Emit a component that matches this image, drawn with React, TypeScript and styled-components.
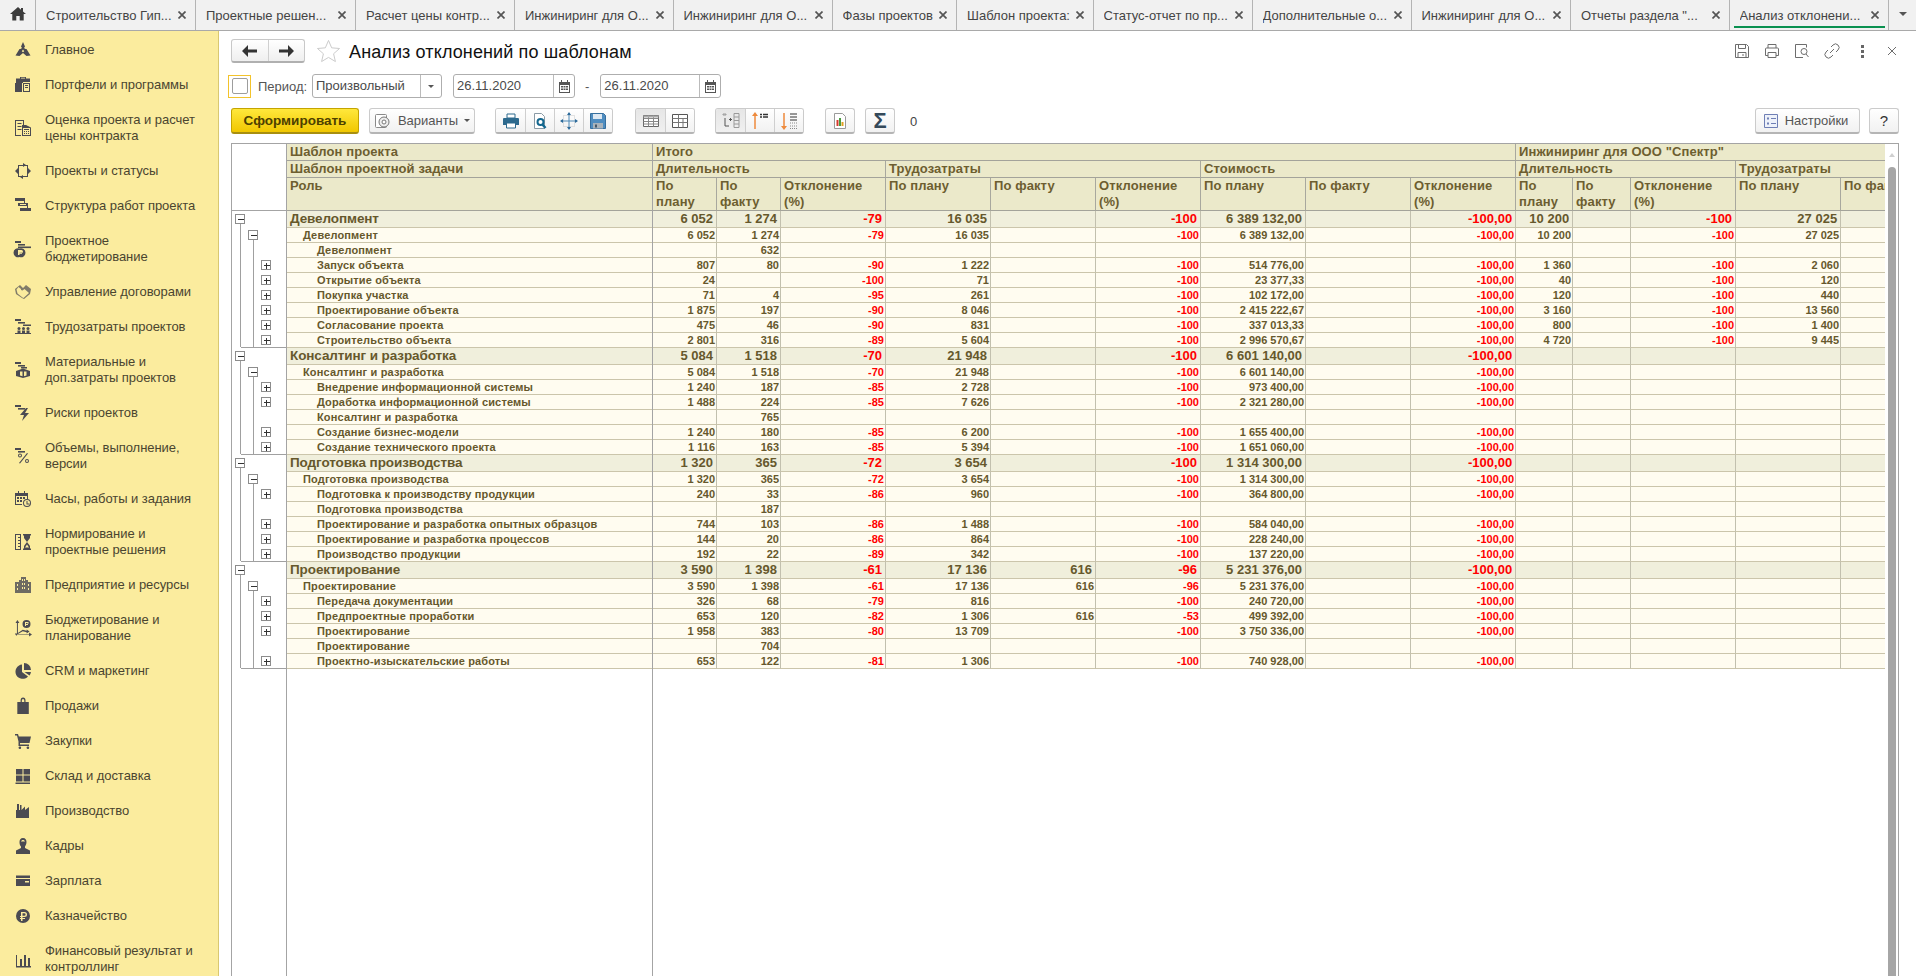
import React from "react";
import styled, { createGlobalStyle } from "styled-components";

const Global = createGlobalStyle`
  html, body { margin: 0; padding: 0; height: 100%; overflow: hidden; background: #fff; }
  #root { height: 100%; }
  * { box-sizing: border-box; }
  body { font-family: "Liberation Sans", Arial, sans-serif; font-size: 13px; color: #4a4530; }
`;

const Page = styled.div`display: flex; flex-direction: column; width: 1916px; height: 976px; overflow: hidden;`;

/* ---------- Tabs ---------- */
const TabBar = styled.div`display: flex; height: 31px; flex: none; background: #f1f1f1; border-bottom: 1px solid #a9a9a9;`;
const HomeTab = styled.div`width: 36px; flex: none; display: flex; align-items: center; justify-content: center; border-right: 1px solid #b4b4b4; padding-bottom: 3px;`;
const Tab = styled.div<{ $w: number; $active?: boolean }>`
  position: relative; flex: none; width: ${p => p.$w}px; display: flex; align-items: center; padding: 0 0 0 10px;
  border-right: 1px solid #b4b4b4; color: #444; font-size: 13px; white-space: nowrap;
  ${p => p.$active ? `&::after { content: ""; position: absolute; left: 4px; right: 3px; bottom: 2px; height: 2px; background: #0a9150; }` : ""}
`;
const TabLabel = styled.span`flex: 1; overflow: hidden;`;
const TabClose = styled.svg`flex: none; width: 8px; height: 8px; margin-right: 9px; fill: none; stroke: #555; stroke-width: 1.7;`;
const TabMenu = styled.div`flex: 1; display: flex; align-items: center; justify-content: center; padding-bottom: 3px;`;
const Caret = styled.span<{ $size?: number }>`
  width: 0; height: 0; display: inline-block;
  border-left: ${p => p.$size ?? 3}px solid transparent; border-right: ${p => p.$size ?? 3}px solid transparent;
  border-top: ${p => p.$size ?? 3}px solid #555;
`;

/* ---------- Sidebar ---------- */
const Main = styled.div`display: flex; flex: 1; min-height: 0;`;
const Sidebar = styled.nav`width: 219px; flex: none; background: #fbec9e; border-right: 1px solid #d9c871; padding-top: 1px; overflow: hidden;`;
const SideItem = styled.div`display: flex; align-items: center; padding: 9.5px 0 9.5px 15px; gap: 14px; line-height: 16px; color: #4a4530; white-space: pre-line; font-size: 13px; letter-spacing: -0.05px;`;
const SideIcon = styled.svg`width: 16px; height: 16px; flex: none; fill: #4b4b52; stroke: none; overflow: visible;`;

/* ---------- Content ---------- */
const Content = styled.main`flex: 1; min-width: 0; display: flex; flex-direction: column; padding: 8px 17px 0 12px;`;
const TitleRow = styled.div`display: flex; align-items: center; height: 24px; flex: none;`;
const NavGroup = styled.div`display: flex; width: 74px; height: 24px; border: 1px solid #c8c8c8; border-bottom: 2px solid #b0b0b0; border-radius: 3px; background: linear-gradient(#fff, #efefef);`;
const NavBtn = styled.div`flex: 1; display: flex; align-items: center; justify-content: center; & + & { border-left: 1px solid #d0d0d0; }`;
const Star = styled.svg`width: 23px; height: 24px; margin-left: 12px; fill: #fff; stroke: #c9c9c9; stroke-width: 1;`;
const Title = styled.h1`margin: 0 0 0 9px; font-size: 18px; font-weight: 400; color: #111; white-space: nowrap; line-height: 24px; padding-top: 1px; letter-spacing: 0.12px;`;
const RightIcons = styled.div`margin-left: auto; display: flex; align-items: center; gap: 14px; margin-right: -1px; margin-top: -1px;`;
const TopIcon = styled.svg`width: 16px; height: 16px; fill: none; stroke: #6d6d6d; stroke-width: 1;`;
const TopDots = styled(TopIcon)`stroke: none; fill: #666;`;

const PeriodRow = styled.div`display: flex; align-items: center; height: 24px; margin-top: 11px; flex: none;`;
const FocusBox = styled.div`width: 23px; height: 23px; margin-left: -3px; border: 1px solid #f3c32b; display: flex; align-items: center; justify-content: center;`;
const Check = styled.div`width: 16px; height: 16px; background: #fff; border: 1px solid #9d9d9d; border-radius: 2px;`;
const FieldLabel = styled.span`margin-left: 7px; width: 54px; color: #555; font-size: 13px;`;
const Field = styled.div<{ $w: number }>`display: flex; align-items: stretch; width: ${p => p.$w}px; height: 24px; border: 1px solid #aeaeae; border-radius: 3px; background: #fff;`;
const FieldText = styled.span`flex: 1; padding-left: 3px; line-height: 22px; color: #4a4a4a; font-size: 13px;`;
const FieldBtn = styled.span<{ $w: number }>`width: ${p => p.$w}px; flex: none; display: flex; align-items: center; justify-content: center; border-left: 1px solid #bbb;`;
const Dash = styled.span<{ $ml: number; $mr: number }>`margin: 0 ${p => p.$mr}px 0 ${p => p.$ml}px; color: #555;`;

const Toolbar = styled.div`display: flex; align-items: center; height: 26px; margin-top: 10px; flex: none;`;
const PrimaryBtn = styled.button`
  width: 128px; height: 26px; padding: 0; font: bold 13.5px "Liberation Sans", Arial, sans-serif; color: #4d4000;
  background: linear-gradient(#ffe83c, #f1c700); border: 1px solid #c4a400; border-bottom: 2px solid #a88f10; border-radius: 3px;
`;
const GreyBtn = styled.div<{ $w: number; $ml: number }>`
  display: flex; align-items: center; justify-content: center; gap: 6px; width: ${p => p.$w}px; height: 26px; margin-left: ${p => p.$ml}px; color: #555; font-size: 13px;
  background: linear-gradient(#fff, #f1f1f1); border: 1px solid #cbcbcb; border-bottom: 2px solid #b5b5b5; border-radius: 3px; flex: none;
`;
const SettingsBtn = styled(GreyBtn)`padding-right: 5px; gap: 5px;`;
const BtnGroup = styled.div<{ $ml: number }>`
  display: flex; height: 26px; margin-left: ${p => p.$ml}px; flex: none;
  border: 1px solid #cbcbcb; border-bottom: 2px solid #b5b5b5; border-radius: 3px; overflow: hidden;
`;
const GroupBtn = styled.div<{ $active?: boolean }>`
  width: 29px; display: flex; align-items: center; justify-content: center;
  background: ${p => p.$active ? "linear-gradient(#e6e6e6, #f0f0f0)" : "linear-gradient(#fff, #f1f1f1)"};
  & + & { border-left: 1px solid #cfcfcf; }
`;
const ToolIcon = styled.svg`width: 18px; height: 18px; fill: none; stroke: none; flex: none;`;
const Counter = styled.span`margin-left: 15px; color: #444;`;
const Spacer = styled.div`flex: 1;`;
const SigmaGlyph = styled.span`font: bold 22px "Liberation Sans", Arial, sans-serif; color: #34495a; line-height: 22px;`;
const Help = styled.span`font-size: 15px; color: #333;`;

/* ---------- Report ---------- */
const Report = styled.section`display: flex; flex: 1; min-height: 0; margin-top: 9px; border: 1px solid #a4a4a4; border-bottom: 0; overflow: hidden; background: #fff;`;
const GutterPane = styled.div`width: 55px; flex: none; border-right: 1px solid #a4a4a4;`;
const GutterHead = styled.div`height: 67px; border-bottom: 1px solid #a4a4a4;`;
const GutterSvg = styled.svg`display: block; shape-rendering: crispEdges;`;
const FixedPane = styled.div`width: 366px; flex: none; border-right: 1px solid #a4a4a4;`;
const DataPane = styled.div`flex: 1; min-width: 0; overflow: hidden;`;
const Table = styled.table<{ $w: number }>`table-layout: fixed; border-collapse: separate; border-spacing: 0; width: ${p => p.$w}px;`;
const Col = styled.col<{ $w: number }>`width: ${p => p.$w}px;`;
const Head = styled.th<{ $h: number; $noRight?: boolean }>`
  height: ${p => p.$h}px; padding: 0 0 0 3px; text-align: left; vertical-align: top; overflow: hidden; white-space: nowrap;
  font-weight: 700; font-size: 13px; line-height: 16px; color: #6d5e30; letter-spacing: 0.1px;
  background: #ebe9ca; border-bottom: 1px solid #a3a39a; ${p => p.$noRight ? "" : "border-right: 1px solid #a8a89e;"}
`;
const RowHeadCell = styled.td<{ $group: boolean; $level: number }>`
  height: ${p => p.$group ? 17 : 15}px; padding: 0 0 0 ${p => p.$group ? 3 : p.$level === 1 ? 16 : 30}px; overflow: hidden; white-space: nowrap;
  font-weight: 700; font-size: ${p => p.$group ? 13.5 : 11}px; line-height: ${p => p.$group ? 16 : 14}px; letter-spacing: ${p => p.$group ? -0.1 : 0.15}px;
  color: #66582c; background: ${p => p.$group ? "#f0efdc" : "#fffcf0"}; border-bottom: 1px solid #cbc5ab;
`;
const NumCell = styled.td<{ $group: boolean; $neg: boolean }>`
  height: ${p => p.$group ? 17 : 15}px; padding: 0 ${p => p.$group ? 3 : 1}px 0 0; text-align: right; overflow: hidden; white-space: nowrap;
  font-weight: 700; font-size: ${p => p.$group ? 13 : 11}px; line-height: ${p => p.$group ? 16 : 14}px;
  color: ${p => p.$neg ? "#ff0000" : "#66582c"}; background: ${p => p.$group ? "#f0efdc" : "#fffcf0"};
  border-bottom: 1px solid #cbc5ab; border-right: 1px solid #c2c0ae;
`;
const ScrollPane = styled.div`width: 13px; flex: none; display: flex; flex-direction: column; align-items: center; background: #fff; padding-top: 9px;`;
const ScrollUp = styled.span`width: 0; height: 0; border-left: 3px solid transparent; border-right: 3px solid transparent; border-bottom: 4px solid #cfcfcf;`;
const ScrollThumb = styled.div`width: 8px; flex: 1; margin-top: 10px; background: #a6a6a6; border-radius: 4px 4px 0 0;`;

/* ---------- Data ---------- */
const tabs: [string, number][] = [
  ["Строительство Гип...", 160], ["Проектные решен...", 160], ["Расчет цены контр...", 159], ["Инжиниринг для О...", 158.5],
  ["Инжиниринг для О...", 159], ["Фазы проектов", 124.5], ["Шаблон проекта:", 136.5], ["Статус-отчет по пр...", 159],
  ["Дополнительные о...", 159], ["Инжиниринг для О...", 159.5], ["Отчеты раздела \"...", 158.5], ["Анализ отклонени...", 159.5],
];

const bars = <><rect x="0" y="0" width="6" height="2" /><rect x="3" y="3" width="7" height="1.6" /></>;
const sideIcons: React.ReactNode[] = [
  <path d="M8 0l2 4.500-1 1.500 1.500 1 1 0 4 6.500-4 .5-3.500-3-3.500 3-4-.5 4-6.500 1 0 1.500-1-1-1.500zM8 7.500l-1.200 1.700 1.200 1 1.200-1z" />,
  <><path d="M5 1.500V0h6v1.500h4V5H8v1H1V1.500zM6 .8v.7h4V.8z" /><rect x="0" y="6" width="7" height="9" /><path d="M8 6h7v9H8zM9 7v7h5V7z" fillRule="evenodd" /><rect x="10" y="8" width="3" height="1" /><rect x="10" y="10" width="3" height="1" /></>,
  <><path d="M0 0h9v5H8V1H1v14h5v1H0z" /><rect x="2.5" y="3" width="4" height="1" /><rect x="2.5" y="6" width="4" height="1" /><rect x="2.5" y="9" width="4" height="1" /><path d="M7 5l4 0 5 2.500V16H7zM8 8v7h7V8z" fillRule="evenodd" /><path d="M9 9h5v1H9zM9 11h1v1H9zM11 11h1v1h-1zM13 11h1v1h-1zM9 13h1v1H9zM11 13h1v1h-1zM13 13h1v1h-1z" /></>,
  <><path d="M3 2h10v12H3zM4 3v10h8V3z" fillRule="evenodd" /><path d="M0 8l3-3v6zM16 8l-3-3v6zM8 0l3 2-3 2zM8 16l-3-2 3-2z" /></>,
  <><path d="M0 0h10v3H0z" /><path d="M3 5h10v3H3zM5 6v1h6V6z" fillRule="evenodd" /><path d="M5 10h11v3H5z" /><path d="M9 3h1v2H9zM12 8h1v2h-1z" /></>,
  <>{bars}<rect x="3" y="5.5" width="13" height="1.6" /><path d="M4.500 7.500a4.500 4.500 0 1 1 0 8.500 4.500 4.500 0 1 1 0-8.500zM3 9v5h1.500v-1.200H7v-1H4.500V12H6.500a1.500 1.500 0 0 0 0-3z" fillRule="evenodd" /></>,
  <path d="M8 4l3-3 5 4-1 5-6 5-2-1-6-4-1-5 5-4zM6 5L3.500 3 1.500 5.500l1 4 5 4 1 .5 5.500-5-4.500-4-2 1.500-1.500-.5z" fillRule="evenodd" opacity="0.7" />,
  <>{bars}<rect x="8" y="5.5" width="8" height="1.5" /><circle cx="4" cy="9.5" r="1.5" /><circle cx="8.5" cy="9.5" r="1.5" /><circle cx="13" cy="9.5" r="1.5" /><path d="M2.500 11.500h3V14h-3zM7 11.500h3V14H7zM11.500 11.500h3V14h-3zM0 14h16v1H0z" /></>,
  <>{bars}<rect x="6" y="5" width="6" height="1.5" /><path d="M8 6.500l7 2.500v5l-7 2-7-2V9zM7.500 9.500H5v4l2.500.8zM9 9.500v4.800l2.500-.8v-4z" fillRule="evenodd" /></>,
  <>{bars}<path d="M11 3L5 10h4l-2 6 7-8h-4l3-5z" /></>,
  <>{bars}<path d="M12 5l1 .5-8 10-1-.5zM5 5.500a2 2 0 1 1 0 4 2 2 0 0 1 0-4zM12 11a2 2 0 1 1 0 4 2 2 0 0 1 0-4zM5 6.500a1 1 0 1 0 0 2 1 1 0 0 0 0-2zM12 12a1 1 0 1 0 0 2 1 1 0 0 0 0-2z" fillRule="evenodd" /></>,
  <><path d="M0 2h3V0h1v2h5V0h1v2h3v6h-1V5H1v8h6v1H0z" /><path d="M2 6h2v2H2zM5 6h2v2H5zM8 6h2v2H8zM2 9h2v2H2zM5 9h2v2H5z" /><path d="M12 8a4 4 0 1 1 0 8 4 4 0 0 1 0-8zM12 9a3 3 0 1 0 0 6 3 3 0 0 0 0-6zM11.500 10h1v2.500h2v1h-3z" fillRule="evenodd" /></>,
  <><path d="M0 0h6v16H0zM1 1v14h4V1z" fillRule="evenodd" /><path d="M3 3h2v1H3zM3 6h2v1H3zM3 9h2v1H3zM3 12h2v1H3z" /><path d="M8 0h8v1.500h-1V4l-3 4 3 4v2.500h1V16H8v-1.500h1V12l3-4-3-4V1.500H8zM10 13.500h4l-2-3z" /></>,
  <path d="M0 5h4V3h2V0h5v3h2v2h3v11H0zM2 7v2h1V7zM2 11v2h1v-2zM7 2v2h1V2zM9 2v2h1V2zM7 6v2h1V6zM9 6v2h1V6zM7 10v2h1v-2zM9 10v2h1v-2zM13 7v2h1V7zM13 11v2h1v-2z" fillRule="evenodd" opacity="0.8" />,
  <><path d="M2.500 0l2 3H3v10.300L8 10l4 1V9.800l3 2-3 2v-1.300l-4-1-5 3h11.500v-1.500l3 2-3 2V15H2v1H1v-1H0v-1h2V3H.5z" transform="scale(.97)" /><path d="M11.500 0a4 4 0 1 1 0 8 4 4 0 0 1 0-8zM10 2v4h1V5h2V4h-2V3h1.500v.8h1V2z" fillRule="evenodd" /></>,
  <><path d="M7 1.500v7.500l6 4.500A7.200 7.200 0 1 1 7 1.500z" /><path d="M9 0a7 7 0 0 1 7 7H9z" /><path d="M9.500 9H16a7 7 0 0 1-1.500 3.500z" /></>,
  <path d="M1 4h4V2.500a3 3 0 0 1 6 0V4h4v12H1zM6.500 4h3V2.500a1.500 1.500 0 0 0-3 0z" fillRule="evenodd" transform="translate(1.500 0) scale(.82 1)" />,
  <path d="M0 1h3l.8 2.500H16L14.500 10H5v1.500h9V13H3.500V8.500L2 2.500H0zM4.500 13.500a1.300 1.300 0 1 1 0 2.500 1.300 1.300 0 0 1 0-2.500zM12.500 13.500a1.300 1.300 0 1 1 0 2.500 1.300 1.300 0 0 1 0-2.500z" />,
  <path d="M1 1h6.500v5.500H1zM8.500 1H15v5.500H8.500zM1 7.500h6.500v6H1zM8.500 7.500H15v6H8.500zM.5 14.500H15V16H.5z" />,
  <path d="M2 1h2v6h1l0-5h1.500l0 5L10 3.500V7l4-3v11H1V7h1z" />,
  <path d="M8 0c2.500 0 3.500 2 3.500 4s-1 4-1.500 4.500v1.500l5 2.500V16H1v-3.500L6 10V8.500C5 8 4.500 6 4.500 4S5.500 0 8 0zM8 2c-1 0-1.500.5-2 1.500h4C9.500 2.500 9 2 8 2z" fillRule="evenodd" />,
  <path d="M1 2.500h14v2.500H1zM1 6h14v7H1zM10 8v1.500h4V8z" fillRule="evenodd" />,
  <path d="M8 1a7 7 0 1 1 0 14A7 7 0 0 1 8 1zM6 4v4H5v1h1v1H5v1h1v2h1.500v-2H10v-1H7.500V9H9.500a2.500 2.500 0 0 0 0-5zM7.500 5.200H9.300a1.300 1.300 0 0 1 0 2.600H7.500z" fillRule="evenodd" />,
  <path d="M1 3h1v11h3V7h2v7h2V3h2v11h2V6h2v8h1v1.500H1z" transform="translate(0 1)" />,
];

const sideItems = [
  "Главное", "Портфели и программы", "Оценка проекта и расчет\nцены контракта", "Проекты и статусы", "Структура работ проекта",
  "Проектное\nбюджетирование", "Управление договорами", "Трудозатраты проектов", "Материальные и\nдоп.затраты проектов", "Риски проектов",
  "Объемы, выполнение,\nверсии", "Часы, работы и задания", "Нормирование и\nпроектные решения", "Предприятие и ресурсы", "Бюджетирование и\nпланирование",
  "CRM и маркетинг", "Продажи", "Закупки", "Склад и доставка", "Производство", "Кадры", "Зарплата", "Казначейство", "Финансовый результат и\nконтроллинг",
];

type Row = { name: string; level: 0 | 1 | 2; box: boolean; vals: string[] };
const R = (name: string, level: 0 | 1 | 2, box: boolean, line: string): Row => {
  const vals = line.split("|");
  while (vals.length < 14) vals.push("");
  return { name, level, box, vals };
};
const rows: Row[] = [
  R("Девелопмент", 0, true, "6 052|1 274|-79|16 035||-100|6 389 132,00||-100,00|10 200||-100|27 025|"),
  R("Девелопмент", 1, true, "6 052|1 274|-79|16 035||-100|6 389 132,00||-100,00|10 200||-100|27 025|"),
  R("Девелопмент", 2, false, "|632"),
  R("Запуск объекта", 2, true, "807|80|-90|1 222||-100|514 776,00||-100,00|1 360||-100|2 060|"),
  R("Открытие объекта", 2, true, "24||-100|71||-100|23 377,33||-100,00|40||-100|120|"),
  R("Покупка участка", 2, true, "71|4|-95|261||-100|102 172,00||-100,00|120||-100|440|"),
  R("Проектирование объекта", 2, true, "1 875|197|-90|8 046||-100|2 415 222,67||-100,00|3 160||-100|13 560|"),
  R("Согласование проекта", 2, true, "475|46|-90|831||-100|337 013,33||-100,00|800||-100|1 400|"),
  R("Строительство объекта", 2, true, "2 801|316|-89|5 604||-100|2 996 570,67||-100,00|4 720||-100|9 445|"),
  R("Консалтинг и разработка", 0, true, "5 084|1 518|-70|21 948||-100|6 601 140,00||-100,00"),
  R("Консалтинг и разработка", 1, true, "5 084|1 518|-70|21 948||-100|6 601 140,00||-100,00"),
  R("Внедрение информационной системы", 2, true, "1 240|187|-85|2 728||-100|973 400,00||-100,00"),
  R("Доработка информационной системы", 2, true, "1 488|224|-85|7 626||-100|2 321 280,00||-100,00"),
  R("Консалтинг и разработка", 2, false, "|765"),
  R("Создание бизнес-модели", 2, true, "1 240|180|-85|6 200||-100|1 655 400,00||-100,00"),
  R("Создание технического проекта", 2, true, "1 116|163|-85|5 394||-100|1 651 060,00||-100,00"),
  R("Подготовка производства", 0, true, "1 320|365|-72|3 654||-100|1 314 300,00||-100,00"),
  R("Подготовка производства", 1, true, "1 320|365|-72|3 654||-100|1 314 300,00||-100,00"),
  R("Подготовка к производству продукции", 2, true, "240|33|-86|960||-100|364 800,00||-100,00"),
  R("Подготовка производства", 2, false, "|187"),
  R("Проектирование и разработка опытных образцов", 2, true, "744|103|-86|1 488||-100|584 040,00||-100,00"),
  R("Проектирование и разработка процессов", 2, true, "144|20|-86|864||-100|228 240,00||-100,00"),
  R("Производство продукции", 2, true, "192|22|-89|342||-100|137 220,00||-100,00"),
  R("Проектирование", 0, true, "3 590|1 398|-61|17 136|616|-96|5 231 376,00||-100,00"),
  R("Проектирование", 1, true, "3 590|1 398|-61|17 136|616|-96|5 231 376,00||-100,00"),
  R("Передача документации", 2, true, "326|68|-79|816||-100|240 720,00||-100,00"),
  R("Предпроектные проработки", 2, true, "653|120|-82|1 306|616|-53|499 392,00||-100,00"),
  R("Проектирование", 2, true, "1 958|383|-80|13 709||-100|3 750 336,00||-100,00"),
  R("Проектирование", 2, false, "|704"),
  R("Проектно-изыскательские работы", 2, true, "653|122|-81|1 306||-100|740 928,00||-100,00"),
];

const colWidths = [64, 64, 105, 105, 105, 105, 105, 105, 105, 57, 58, 105, 105, 105];
const tableW = colWidths.reduce((a, b) => a + b, 0);

function TreeBox({ x, y, plus }: { x: number; y: number; plus: boolean }) {
  return (
    <g>
      <rect x={x - 4.5} y={y - 4.5} width={9} height={9} fill="#fff" stroke="#8c8c8c" />
      <line x1={x - 2.5} x2={x + 3.5} y1={y + 0.5} y2={y + 0.5} stroke="#333" />
      {plus && <line x1={x + 0.5} x2={x + 0.5} y1={y - 2.5} y2={y + 3.5} stroke="#333" />}
    </g>
  );
}

function Gutter() {
  const nodes: React.ReactNode[] = [];
  const lines: React.ReactNode[] = [];
  let y = 0, groupStart = 0, subY = 0, open = false;
  const close = (bottom: number) => {
    lines.push(
      <line key={`a${bottom}`} x1={8.5} x2={8.5} y1={groupStart + 8} y2={bottom} stroke="#a0a0a0" />,
      <line key={`b${bottom}`} x1={21.5} x2={21.5} y1={subY} y2={bottom} stroke="#a0a0a0" />,
      <line key={`c${bottom}`} x1={8.5} x2={54} y1={bottom + 0.5} y2={bottom + 0.5} stroke="#a0a0a0" />
    );
  };
  rows.forEach((r, i) => {
    if (r.level === 0) {
      if (open) close(y - 1);
      groupStart = y; open = true;
      nodes.push(<TreeBox key={i} x={8} y={y + 8} plus={false} />);
      y += 17;
    } else if (r.level === 1) {
      subY = y + 7;
      nodes.push(<TreeBox key={i} x={21} y={y + 7} plus={false} />);
      y += 15;
    } else {
      if (r.box) nodes.push(<TreeBox key={i} x={34} y={y + 7} plus />);
      y += 15;
    }
  });
  close(y - 1);
  return <GutterSvg width={54} height={y + 2}>{lines}{nodes}</GutterSvg>;
}

function CalendarIcon() {
  return (
    <svg width="11" height="13" viewBox="0 0 11 13" fill="#555">
      <path d="M0 2h2V0h1v2h5V0h1v2h2v11H0zM1 5v7h9V5z" fillRule="evenodd" />
      <path d="M2 6h2v1.500H2zM4.500 6h2v1.500h-2zM7 6h2v1.500H7zM2 8.500h2V10H2zM4.500 8.500h2V10h-2zM7 8.500h2V10H7z" />
    </svg>
  );
}

export default function App() {
  return (
    <Page>
      <Global />
      <TabBar>
        <HomeTab>
          <svg width="16" height="15" viewBox="0 0 16 15" fill="#3c3c3c"><path d="M8 1L0 8h2.300v6.500h4V10h3.400v4.500h4V8H16l-3-2.600V2h-2v1.700z" /></svg>
        </HomeTab>
        {tabs.map(([t, w], i) => (
          <Tab key={i} $w={w} $active={i === tabs.length - 1}>
            <TabLabel>{t}</TabLabel>
            <TabClose viewBox="0 0 8 8"><path d="M.5.5l7 7M7.500.5l-7 7" /></TabClose>
          </Tab>
        ))}
        <TabMenu><Caret $size={4} /></TabMenu>
      </TabBar>
      <Main>
        <Sidebar>
          {sideItems.map((s, i) => (
            <SideItem key={i}>
              <SideIcon viewBox="0 0 16 16">{sideIcons[i]}</SideIcon>
              <span>{s}</span>
            </SideItem>
          ))}
        </Sidebar>
        <Content>
          <TitleRow>
            <NavGroup>
              <NavBtn><svg width="15" height="12" viewBox="0 0 15 12" fill="#333"><path d="M6 0L0 6l6 6V7.500h9v-3H6z" /></svg></NavBtn>
              <NavBtn><svg width="15" height="12" viewBox="0 0 15 12" fill="#333"><path d="M9 0l6 6-6 6V7.500H0v-3h9z" /></svg></NavBtn>
            </NavGroup>
            <Star viewBox="0 0 24 24"><path d="M12 1l3.300 7.700 8.200.7-6.200 5.500 1.900 8.100L12 18.700 4.800 23l1.900-8.100L.5 9.400l8.200-.7z" /></Star>
            <Title>Анализ отклонений по шаблонам</Title>
            <RightIcons>
              <TopIcon viewBox="0 0 16 16"><path d="M1.500 1.500h11l2 2v11h-13zM4.500 1.500v4h7v-4M4 14.500v-5h8v5M9 11v2" /></TopIcon>
              <TopIcon viewBox="0 0 16 16"><path d="M4 5V1.500h8V5M1.500 12.500V6a1 1 0 0 1 1-1h11a1 1 0 0 1 1 1v6.500H12M4 12.500H1.500M4 9.500h8v5H4z" /></TopIcon>
              <TopIcon viewBox="0 0 16 16"><path d="M9 14.500H1.500v-13h11v3" /><circle cx="10" cy="8.500" r="3" /><path d="M12 11l2.500 3" /></TopIcon>
              <TopIcon viewBox="0 0 16 16"><path d="M6 10l4-4M7 4l2-2a3 3 0 0 1 5 5l-2 2M9 12l-2 2a3 3 0 0 1-5-5l2-2" /></TopIcon>
              <TopDots viewBox="0 0 16 16"><rect x="7" y="2" width="3" height="3" /><rect x="7" y="7" width="3" height="3" /><rect x="7" y="12" width="3" height="3" /></TopDots>
              <TopIcon viewBox="0 0 16 16"><path d="M4 4l8 8M12 4l-8 8" /></TopIcon>
            </RightIcons>
          </TitleRow>
          <PeriodRow>
            <FocusBox><Check /></FocusBox>
            <FieldLabel>Период:</FieldLabel>
            <Field $w={130}>
              <FieldText>Произвольный</FieldText>
              <FieldBtn $w={21}><Caret /></FieldBtn>
            </Field>
            <Dash $ml={11} $mr={0} />
            <Field $w={122}>
              <FieldText>26.11.2020</FieldText>
              <FieldBtn $w={21}><CalendarIcon /></FieldBtn>
            </Field>
            <Dash $ml={10} $mr={11}>-</Dash>
            <Field $w={121}>
              <FieldText>26.11.2020</FieldText>
              <FieldBtn $w={21}><CalendarIcon /></FieldBtn>
            </Field>
          </PeriodRow>
          <Toolbar>
            <PrimaryBtn>Сформировать</PrimaryBtn>
            <GreyBtn $w={106} $ml={10}>
              <ToolIcon viewBox="0 0 18 18"><rect x="1.5" y="2.5" width="11" height="13" rx="1" fill="#fff" stroke="#8a8a8a" /><circle cx="10" cy="10" r="5" fill="#eee" stroke="#777" /><circle cx="10" cy="10" r="2" fill="#fff" stroke="#777" /></ToolIcon>
              <span>Варианты</span>
              <Caret />
            </GreyBtn>
            <BtnGroup $ml={20}>
              <GroupBtn><ToolIcon viewBox="0 0 18 18"><path d="M5 2h8v4H5z" fill="#fff" stroke="#2d6a8e" /><path d="M2 6h14a1 1 0 0 1 1 1v6h-3v-2H4v2H1V7a1 1 0 0 1 1-1z" fill="#2d6a8e" /><path d="M4.500 11h9v5h-9z" fill="#fff" stroke="#2d6a8e" /></ToolIcon></GroupBtn>
              <GroupBtn><ToolIcon viewBox="0 0 18 18"><path d="M3.500 1.500h7l3 3v12h-10z" fill="#fff" stroke="#8a9aa5" /><circle cx="9.5" cy="10" r="3" fill="#fff" stroke="#15688f" strokeWidth="2" /><path d="M11.500 12.500l3 3.500" stroke="#15688f" strokeWidth="2.5" /></ToolIcon></GroupBtn>
              <GroupBtn><ToolIcon viewBox="0 0 18 18"><path d="M3.500 3.500h11v11h-11z" stroke="#c8c8c8" strokeDasharray="1 1" /><path d="M9 1v16M1 9h16" stroke="#4c88b6" /><path d="M9 0l2 3H7zM9 18l2-3H7zM0 9l3-2v4zM18 9l-3-2v4z" fill="#2d6a9a" /></ToolIcon></GroupBtn>
              <GroupBtn><ToolIcon viewBox="0 0 18 18"><path d="M1.500 1.500h13l2 2v13h-15z" fill="#4f8dc0" stroke="#366f9e" /><path d="M4 2h9v5H4z" fill="#dde8f2" /><path d="M4 11h10v5.500H4z" fill="#a9b3bb" /><path d="M6 12.500h2v3H6z" fill="#44596a" /></ToolIcon></GroupBtn>
            </BtnGroup>
            <BtnGroup $ml={22}>
              <GroupBtn $active><ToolIcon viewBox="0 0 18 18"><path d="M1.500 3.500h15v11h-15z" fill="#fff" stroke="#666" /><path d="M1.500 6.500h15M1.500 9.500h15M1.500 12h15M6.500 3.500v11M11.500 3.500v11" stroke="#888" /><path d="M1.500 3.500h15v2h-15z" fill="#aaa" /></ToolIcon></GroupBtn>
              <GroupBtn><ToolIcon viewBox="0 0 18 18"><path d="M1.500 2.500h15v13h-15z" fill="#fff" stroke="#555" /><path d="M1.500 6.500h15M1.500 10.500h15M7.500 2.500v13M12 6.500v9" stroke="#777" /></ToolIcon></GroupBtn>
            </BtnGroup>
            <BtnGroup $ml={20}>
              <GroupBtn $active><ToolIcon viewBox="0 0 18 18"><path d="M1 2h3v1H1zM12 1.500h5v14h-5zM12 5h5M12 8.500h5M12 12h5" stroke="#9a9a9a" /><path d="M3 6v8h4M7 7.500h3M8.500 6v3" stroke="#555" /></ToolIcon></GroupBtn>
              <GroupBtn><ToolIcon viewBox="0 0 18 18"><path d="M4 17V3" stroke="#ee8a3c" strokeWidth="1.5" /><path d="M4 0l3 4H1z" fill="#ee8a3c" /><path d="M9 2.500h2M12 2.500h5M9 5h2M12 5h5" stroke="#333" strokeWidth="1.3" /></ToolIcon></GroupBtn>
              <GroupBtn><ToolIcon viewBox="0 0 18 18"><path d="M4 1v13" stroke="#ee8a3c" strokeWidth="1.5" /><path d="M4 18l3-4H1z" fill="#ee8a3c" /><path d="M10 2h7M10 5h7M10 8h7" stroke="#333" /><path d="M10 11h7M10 14h7M10 16.500h7" stroke="#888" strokeDasharray="1 1" /></ToolIcon></GroupBtn>
            </BtnGroup>
            <GreyBtn $w={30} $ml={21}>
              <ToolIcon viewBox="0 0 18 18"><path d="M3.500 1.500h8l3 3v12h-11z" fill="#fff" stroke="#9a9a9a" /><path d="M5.500 8h2v6h-2z" fill="#d63b2f" /><path d="M8 6h2v8H8z" fill="#4a9b3f" /><path d="M10.500 10h2v4h-2z" fill="#e0a020" /></ToolIcon>
            </GreyBtn>
            <GreyBtn $w={30} $ml={10}><SigmaGlyph>Σ</SigmaGlyph></GreyBtn>
            <Counter>0</Counter>
            <Spacer />
            <SettingsBtn $w={105} $ml={0}>
              <ToolIcon viewBox="0 0 18 18"><path d="M2.500 2.500h13v13h-13z" fill="#eef2fa" stroke="#6f7fb5" /><path d="M5 5.500h2v2H5zM5 10.500h2v2H5z" fill="#6f7fb5" /><path d="M9 6.500h5M9 11.500h5" stroke="#6f7fb5" /></ToolIcon>
              <span>Настройки</span>
            </SettingsBtn>
            <GreyBtn $w={30} $ml={9}><Help>?</Help></GreyBtn>
          </Toolbar>
          <Report>
            <GutterPane>
              <GutterHead />
              <Gutter />
            </GutterPane>
            <FixedPane>
              <Table $w={365}>
                <thead>
                  <tr><Head $h={17} $noRight>Шаблон проекта</Head></tr>
                  <tr><Head $h={17} $noRight>Шаблон проектной задачи</Head></tr>
                  <tr><Head $h={33} $noRight>Роль</Head></tr>
                </thead>
                <tbody>
                  {rows.map((r, i) => (
                    <tr key={i}><RowHeadCell $group={r.level === 0} $level={r.level}>{r.name}</RowHeadCell></tr>
                  ))}
                </tbody>
              </Table>
            </FixedPane>
            <DataPane>
              <Table $w={tableW}>
                <colgroup>{colWidths.map((w, i) => <Col key={i} $w={w} />)}</colgroup>
                <thead>
                  <tr>
                    <Head $h={17} colSpan={9}>Итого</Head>
                    <Head $h={17} colSpan={5}>Инжиниринг для ООО "Спектр"</Head>
                  </tr>
                  <tr>
                    <Head $h={17} colSpan={3}>Длительность</Head>
                    <Head $h={17} colSpan={3}>Трудозатраты</Head>
                    <Head $h={17} colSpan={3}>Стоимость</Head>
                    <Head $h={17} colSpan={3}>Длительность</Head>
                    <Head $h={17} colSpan={2}>Трудозатраты</Head>
                  </tr>
                  <tr>
                    {[0, 1, 2].map(b => (
                      <React.Fragment key={b}>
                        {b === 0 ? (
                          <><Head $h={33}>По<br />плану</Head><Head $h={33}>По<br />факту</Head></>
                        ) : (
                          <><Head $h={33}>По плану</Head><Head $h={33}>По факту</Head></>
                        )}
                        <Head $h={33}>Отклонение<br />(%)</Head>
                      </React.Fragment>
                    ))}
                    <Head $h={33}>По<br />плану</Head>
                    <Head $h={33}>По<br />факту</Head>
                    <Head $h={33}>Отклонение<br />(%)</Head>
                    <Head $h={33}>По плану</Head>
                    <Head $h={33}>По факту</Head>
                  </tr>
                </thead>
                <tbody>
                  {rows.map((r, i) => (
                    <tr key={i}>
                      {r.vals.map((v, j) => (
                        <NumCell key={j} $group={r.level === 0} $neg={v.startsWith("-")}>{v}</NumCell>
                      ))}
                    </tr>
                  ))}
                </tbody>
              </Table>
            </DataPane>
            <ScrollPane>
              <ScrollUp />
              <ScrollThumb />
            </ScrollPane>
          </Report>
        </Content>
      </Main>
    </Page>
  );
}
